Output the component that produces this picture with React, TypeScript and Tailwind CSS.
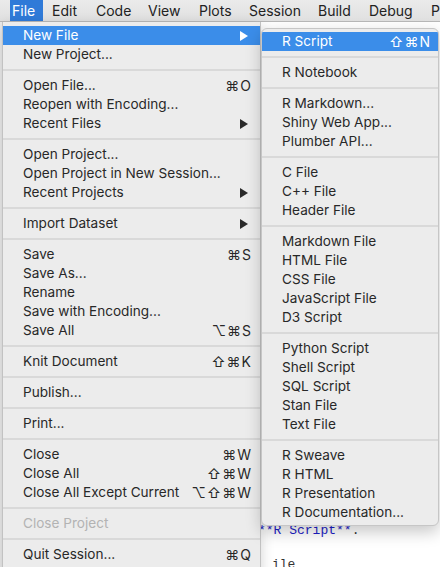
import React from 'react';

type Row =
  | { kind: 'sep' }
  | { kind: 'item'; label: string; shortcut?: string; sub?: boolean; active?: boolean; disabled?: boolean };

const sep: Row = { kind: 'sep' };
const item = (label: string, extra: Partial<Extract<Row, { kind: 'item' }>> = {}): Row => ({ kind: 'item', label, ...extra });

const fileMenu: Row[] = [
  item('New File', { sub: true, active: true }),
  item('New Project...'),
  sep,
  item('Open File...', { shortcut: '⌘O' }),
  item('Reopen with Encoding...'),
  item('Recent Files', { sub: true }),
  sep,
  item('Open Project...'),
  item('Open Project in New Session...'),
  item('Recent Projects', { sub: true }),
  sep,
  item('Import Dataset', { sub: true }),
  sep,
  item('Save', { shortcut: '⌘S' }),
  item('Save As...'),
  item('Rename'),
  item('Save with Encoding...'),
  item('Save All', { shortcut: '⌥⌘S' }),
  sep,
  item('Knit Document', { shortcut: '⇧⌘K' }),
  sep,
  item('Publish...'),
  sep,
  item('Print...'),
  sep,
  item('Close', { shortcut: '⌘W' }),
  item('Close All', { shortcut: '⇧⌘W' }),
  item('Close All Except Current', { shortcut: '⌥⇧⌘W' }),
  sep,
  item('Close Project', { disabled: true }),
  sep,
  item('Quit Session...', { shortcut: '⌘Q' }),
];

const newFileMenu: Row[] = [
  item('R Script', { shortcut: '⇧⌘N', active: true }),
  sep,
  item('R Notebook'),
  sep,
  item('R Markdown...'),
  item('Shiny Web App...'),
  item('Plumber API...'),
  sep,
  item('C File'),
  item('C++ File'),
  item('Header File'),
  sep,
  item('Markdown File'),
  item('HTML File'),
  item('CSS File'),
  item('JavaScript File'),
  item('D3 Script'),
  sep,
  item('Python Script'),
  item('Shell Script'),
  item('SQL Script'),
  item('Stan File'),
  item('Text File'),
  sep,
  item('R Sweave'),
  item('R HTML'),
  item('R Presentation'),
  item('R Documentation...'),
];

// menu bar titles, widths picked so the labels land where the screenshot has them
const menubar = [
  { label: 'File', box: 'w-[33px] pl-[2px]', active: true },
  { label: 'Edit', box: 'w-[45px] pl-[9px]' },
  { label: 'Code', box: 'w-[52px] pl-[8px]' },
  { label: 'View', box: 'w-[51px] pl-[8px]' },
  { label: 'Plots', box: 'w-[50px] pl-[8px]' },
  { label: 'Session', box: 'w-[69px] pl-[8px]' },
  { label: 'Build', box: 'w-[51px] pl-[8px]' },
  { label: 'Debug', box: 'w-[62px] pl-[8px]' },
  { label: 'Profile', box: 'w-[60px] pl-[8px]' },
];

function Arrow({ white }: { white?: boolean }) {
  return (
    <svg width="8" height="10" viewBox="0 0 8 10" className="shrink-0">
      <polygon points="0,0 8,5 0,10" fill={white ? '#ffffff' : '#2a2a2a'} />
    </svg>
  );
}

function MenuRows({ rows, textPad, rightPad }: { rows: Row[]; textPad: string; rightPad: string }) {
  return (
    <>
      {rows.map((r, i) =>
        r.kind === 'sep' ? (
          <div key={i} className="h-[12px] flex items-center">
            <div className="h-[2px] w-full bg-[#d9d9d9]" />
          </div>
        ) : (
          <div
            key={i}
            className={`h-[19px] flex items-center justify-between ${textPad} ${rightPad} ${
              r.active ? 'bg-[#3b8de9] text-white' : r.disabled ? 'text-[#b3b3b3]' : 'text-[#282828]'
            }`}
          >
            <span className="whitespace-nowrap">{r.label}</span>
            {r.shortcut && (
              <span className="whitespace-nowrap tracking-[1px] text-[14px]">{r.shortcut}</span>
            )}
            {r.sub && (
              <span className="mr-[4px]">
                <Arrow white={r.active} />
              </span>
            )}
          </div>
        )
      )}
    </>
  );
}

export default function App() {
  return (
    <div className="relative w-[440px] h-[567px] overflow-hidden bg-white font-['Inter','DejaVu_Sans',sans-serif] text-[13.6px]">
      {/* Menu bar */}
      <div className="h-[22px] flex bg-gradient-to-b from-[#ebebeb] to-[#e0e0e0] border-b border-[#b8b8b8] pl-[10px] text-[14px] text-[#222] overflow-hidden whitespace-nowrap">
        {menubar.map((m) => (
          <div
            key={m.label}
            className={`${m.box} shrink-0 h-full flex items-center ${m.active ? 'bg-[#2f7ad8] text-white' : ''}`}
          >
            {m.label}
          </div>
        ))}
      </div>

      {/* Editor behind the menus */}
      <div className="flex h-[545px]">
        <div className="w-[2px] bg-[#ececec]" />
        <div className="flex-1 pt-[500px] pl-[256px] font-['Liberation_Mono',monospace] text-[13px] leading-[17px]">
          <div className="whitespace-nowrap text-[#1d1dc8]">
            **R Script**<span className="text-[#333]">.</span>
          </div>
          <div className="mt-[17px] pl-[14px] whitespace-nowrap text-[#333]">ile</div>
        </div>
      </div>

      {/* File menu */}
      <div className="absolute left-[2px] top-[22px] w-[259px] h-[560px] bg-[#ececec] border-l border-r border-[#c2c2c2] pt-[4px] shadow-[0_4px_12px_rgba(0,0,0,0.18)]">
        <MenuRows rows={fileMenu} textPad="pl-[20px]" rightPad="pr-[8px]" />
      </div>

      {/* New File submenu */}
      <div className="absolute left-[261px] top-[28px] w-[178px] h-[498px] bg-[#ececec] border border-[#c6c6c6] rounded-[6px] pt-[3px] shadow-[0_6px_16px_rgba(0,0,0,0.22)] overflow-hidden">
        <MenuRows rows={newFileMenu} textPad="pl-[20px]" rightPad="pr-[7px]" />
      </div>
    </div>
  );
}
